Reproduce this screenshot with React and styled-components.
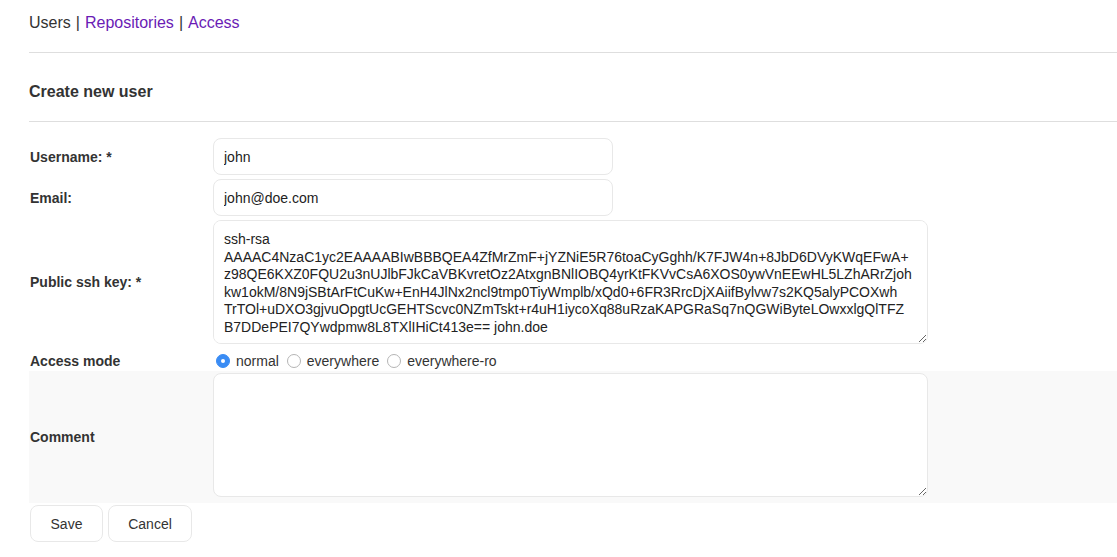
import React from "react";
import styled, { createGlobalStyle } from "styled-components";

const Global = createGlobalStyle`
  html, body { margin: 0; padding: 0; background: #fff; }
  body { font-family: "Liberation Sans", Arial, Helvetica, sans-serif; color: #333; }
`;

const Page = styled.div`
  padding: 0 0 0 29px;
  width: 1088px;
`;

const Nav = styled.nav`
  box-sizing: border-box;
  display: flex;
  align-items: center;
  gap: 5px;
  height: 44px;
  padding-top: 2px;
  margin-bottom: 8px;
  font-size: 16px;
  color: #333;
`;

const NavLink = styled.a`
  color: ${(p) => (p.$current ? "#333" : "#6a1bb5")};
  text-decoration: none;
`;

const Rule = styled.hr`
  margin: 0;
  border: 0;
  border-top: 1px solid #dedede;
  height: 0;
`;

const Title = styled.h2`
  box-sizing: border-box;
  margin: 0;
  height: 68px;
  padding-top: 10px;
  display: flex;
  align-items: center;
  font-size: 16px;
  font-weight: bold;
  color: #333;
`;

const Form = styled.form`
  display: flex;
  flex-direction: column;
  padding-top: 14px;
`;

const Row = styled.div`
  display: grid;
  grid-template-columns: 184px 1fr;
  align-items: center;
  padding: ${(p) => p.$pad || "2px 0"};
  background: ${(p) => (p.$shaded ? "#f9f9f9" : "transparent")};
`;

const Label = styled.label`
  padding-left: 1px;
  padding-top: ${(p) => p.$shift || 0}px;
  font-size: 14px;
  font-weight: bold;
  color: #333;
`;

const TextInput = styled.input`
  box-sizing: border-box;
  width: 400px;
  height: 37px;
  padding: 0 10px;
  border: 1px solid #e8e8e8;
  border-radius: 8px;
  font-family: "Liberation Sans", Arial, sans-serif;
  font-size: 14px;
  color: #222;
  outline: none;
`;

const TextArea = styled.textarea`
  display: block;
  box-sizing: border-box;
  width: 715px;
  height: 124px;
  padding: 10px 12px 10px 10px;
  border: 1px solid #e8e8e8;
  border-radius: 8px;
  font-family: "Liberation Sans", Arial, sans-serif;
  font-size: 14px;
  line-height: 17.5px;
  color: #222;
  background: #fff;
  outline: none;
  resize: both;
  white-space: pre-wrap;
`;

const Radios = styled.div`
  display: flex;
  align-items: center;
  font-size: 14px;
  color: #333;
`;

const RadioLabel = styled.label`
  display: flex;
  align-items: center;
  margin-right: 5px;
`;

const Radio = styled.input`
  appearance: none;
  box-sizing: border-box;
  width: 14px;
  height: 14px;
  margin: 0 6px 0 3px;
  border-radius: 50%;
  border: 1px solid #b5b5b5;
  background: #fff;
  position: relative;
  &:checked {
    border-color: #3a8cf4;
    background: #3a8cf4;
  }
  &:checked::after {
    content: "";
    position: absolute;
    left: 4px;
    top: 4px;
    width: 4px;
    height: 4px;
    border-radius: 50%;
    background: #fff;
  }
`;

const Buttons = styled.div`
  display: flex;
  gap: 5px;
  padding: 2px 0 0 1px;
`;

const Button = styled.button`
  box-sizing: border-box;
  width: ${(p) => p.$w}px;
  height: 37px;
  padding: 0;
  background: #fff;
  border: 1px solid #e8e8e8;
  border-radius: 8px;
  font-family: "Liberation Sans", Arial, sans-serif;
  font-size: 14px;
  color: #333;
`;

const KEY = [
  "ssh-rsa",
  "AAAAC4NzaC1yc2EAAAABIwBBBQEA4ZfMrZmF+jYZNiE5R76toaCyGghh/K7FJW4n+8JbD6DVyKWqEFwA+",
  "z98QE6KXZ0FQU2u3nUJlbFJkCaVBKvretOz2AtxgnBNlIOBQ4yrKtFKVvCsA6XOS0ywVnEEwHL5LZhARrZjoh",
  "kw1okM/8N9jSBtArFtCuKw+EnH4JlNx2ncl9tmp0TiyWmplb/xQd0+6FR3RrcDjXAiifBylvw7s2KQ5alyPCOXwh",
  "TrTOl+uDXO3gjvuOpgtUcGEHTScvc0NZmTskt+r4uH1iycoXq88uRzaKAPGRaSq7nQGWiByteLOwxxlgQlTFZ",
  "B7DDePEI7QYwdpmw8L8TXlIHiCt413e== john.doe",
].join("\n");

export default function App() {
  return (
    <>
      <Global />
      <Page>
        <Nav>
          <NavLink $current>Users</NavLink>
          <span>|</span>
          <NavLink href="#">Repositories</NavLink>
          <span>|</span>
          <NavLink href="#">Access</NavLink>
        </Nav>
        <Rule />
        <Title>Create new user</Title>
        <Rule />
        <Form onSubmit={(e) => e.preventDefault()}>
          <Row>
            <Label>Username: *</Label>
            <TextInput defaultValue="john" />
          </Row>
          <Row>
            <Label>Email:</Label>
            <TextInput defaultValue="john@doe.com" />
          </Row>
          <Row>
            <Label>Public ssh key: *</Label>
            <TextArea defaultValue={KEY} spellCheck={false} />
          </Row>
          <Row $pad="7px 0 2px">
            <Label>Access mode</Label>
            <Radios>
              <RadioLabel>
                <Radio type="radio" name="mode" defaultChecked />
                normal
              </RadioLabel>
              <RadioLabel>
                <Radio type="radio" name="mode" />
                everywhere
              </RadioLabel>
              <RadioLabel>
                <Radio type="radio" name="mode" />
                everywhere-ro
              </RadioLabel>
            </Radios>
          </Row>
          <Row $shaded $pad="2px 0 6px">
            <Label $shift={4}>Comment</Label>
            <TextArea />
          </Row>
          <Buttons>
            <Button $w={73}>Save</Button>
            <Button $w={84}>Cancel</Button>
          </Buttons>
        </Form>
      </Page>
    </>
  );
}
